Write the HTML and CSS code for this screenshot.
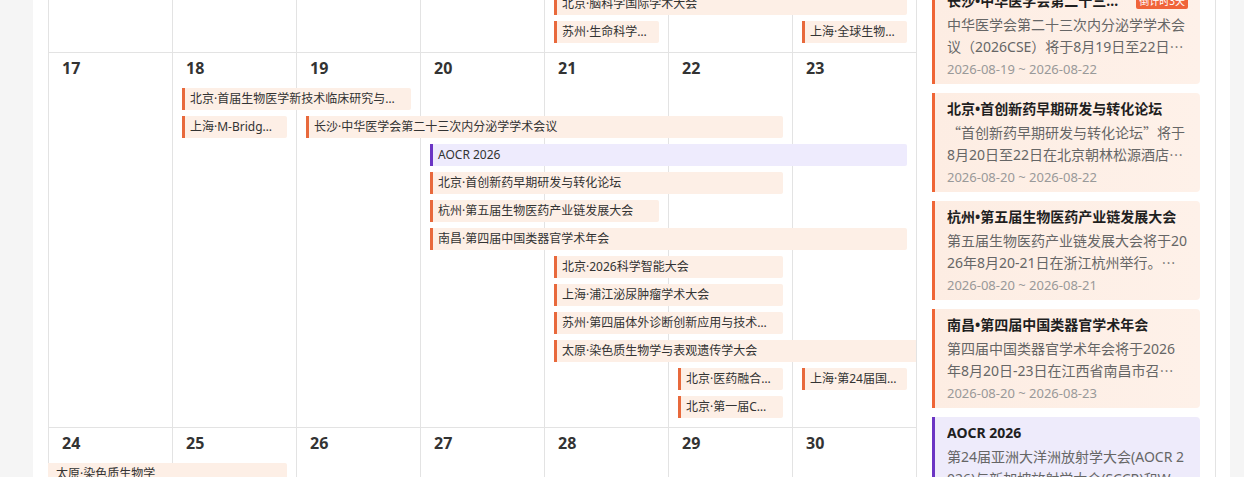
FILE: index.html
```html
<!DOCTYPE html>
<html lang="zh-CN">
<head>
<meta charset="utf-8">
<title>会议日历</title>
<link rel="stylesheet" href="styles.css">
</head>
<body>
<div class="page">
  <div class="calendar">
    <div class="week week-a">
      <div class="cell">10</div><div class="cell">11</div><div class="cell">12</div><div class="cell">13</div><div class="cell">14</div><div class="cell">15</div><div class="cell">16</div>
      <div class="ev" style="grid-column: 5 / span 3; grid-row: 2;">北京·脑科学国际学术大会</div>
      <div class="ev" style="grid-column: 5 / span 1; grid-row: 3;">苏州·生命科学前沿创新论坛</div>
      <div class="ev" style="grid-column: 7 / span 1; grid-row: 3;">上海·全球生物医药创新大会</div>
    </div>
    <div class="week week-b">
      <div class="cell">17</div><div class="cell">18</div><div class="cell">19</div><div class="cell">20</div><div class="cell">21</div><div class="cell">22</div><div class="cell">23</div>
      <div class="ev" style="grid-column: 2 / span 2; grid-row: 2;">北京·首届生物医学新技术临床研究与转化大会</div>
      <div class="ev" style="grid-column: 2 / span 1; grid-row: 3;">上海·M-Bridge 医学创新大会</div>
      <div class="ev" style="grid-column: 3 / span 4; grid-row: 3;">长沙·中华医学会第二十三次内分泌学学术会议</div>
      <div class="ev purple" style="grid-column: 4 / span 4; grid-row: 4;">AOCR 2026</div>
      <div class="ev" style="grid-column: 4 / span 3; grid-row: 5;">北京·首创新药早期研发与转化论坛</div>
      <div class="ev" style="grid-column: 4 / span 2; grid-row: 6;">杭州·第五届生物医药产业链发展大会</div>
      <div class="ev" style="grid-column: 4 / span 4; grid-row: 7;">南昌·第四届中国类器官学术年会</div>
      <div class="ev" style="grid-column: 5 / span 2; grid-row: 8;">北京·2026科学智能大会</div>
      <div class="ev" style="grid-column: 5 / span 2; grid-row: 9;">上海·浦江泌尿肿瘤学术大会</div>
      <div class="ev" style="grid-column: 5 / span 2; grid-row: 10;">苏州·第四届体外诊断创新应用与技术交流大会</div>
      <div class="ev cont-r" style="grid-column: 5 / span 3; grid-row: 11;">太原·染色质生物学与表观遗传学大会</div>
      <div class="ev" style="grid-column: 6 / span 1; grid-row: 12;">北京·医药融合创新大会</div>
      <div class="ev" style="grid-column: 7 / span 1; grid-row: 12;">上海·第24届国际医学大会</div>
      <div class="ev" style="grid-column: 6 / span 1; grid-row: 13;">北京·第一届CAR-T论坛</div>
    </div>
    <div class="week week-c">
      <div class="cell">24</div><div class="cell">25</div><div class="cell">26</div><div class="cell">27</div><div class="cell">28</div><div class="cell">29</div><div class="cell">30</div>
      <div class="ev cont-l" style="grid-column: 1 / span 2; grid-row: 2;">太原·染色质生物学</div>
    </div>
  </div>

  <aside class="sidebar">
    <div class="card">
      <div class="card-head">
        <div class="card-title">长沙•中华医学会第二十三次内分泌学学术会议</div>
        <span class="badge">倒计时3天</span>
      </div>
      <div class="card-desc">中华医学会第二十三次内分泌学学术会议（2026CSE）将于8月19日至22日<span class="cjk">…</span></div>
      <div class="card-date">2026-08-19 ~ 2026-08-22</div>
    </div>
    <div class="card">
      <div class="card-head">
        <div class="card-title">北京•首创新药早期研发与转化论坛</div>
      </div>
      <div class="card-desc"><span class="cjk">“</span>首创新药早期研发与转化论坛<span class="cjk">”</span>将于8月20日至22日在北京朝林松源酒店<span class="cjk">…</span></div>
      <div class="card-date">2026-08-20 ~ 2026-08-22</div>
    </div>
    <div class="card">
      <div class="card-head">
        <div class="card-title">杭州•第五届生物医药产业链发展大会</div>
      </div>
      <div class="card-desc">第五届生物医药产业链发展大会将于2026年8月20-21日在浙江杭州举行。<span class="cjk">…</span></div>
      <div class="card-date">2026-08-20 ~ 2026-08-21</div>
    </div>
    <div class="card">
      <div class="card-head">
        <div class="card-title">南昌•第四届中国类器官学术年会</div>
      </div>
      <div class="card-desc">第四届中国类器官学术年会将于2026年8月20日-23日在江西省南昌市召<span class="cjk">…</span></div>
      <div class="card-date">2026-08-20 ~ 2026-08-23</div>
    </div>
    <div class="card purple">
      <div class="card-head">
        <div class="card-title">AOCR 2026</div>
      </div>
      <div class="card-desc">第24届亚洲大洋洲放射学大会(AOCR 2026)与新加坡放射学大会(SCCR)和W<span class="cjk">…</span></div>
      <div class="card-date">2026-08-20 ~ 2026-08-23</div>
    </div>
  </aside>
</div>
</body>
</html>
```

FILE: styles.css
```css
html, body {
  margin: 0;
  padding: 0;
}
body {
  background: #f5f5f5;
  font-family: "Noto Sans", "Noto Sans CJK SC", sans-serif;
  color: #333;
  overflow: hidden;
  height: 477px;
}
.page {
  display: flex;
  align-items: flex-start;
  box-sizing: border-box;
  width: 1197px;
  margin: -43px 0 0 33px;
  padding: 0 14px 0 15px;
  background: #fff;
}
.calendar {
  flex: none;
  width: 869px;
  box-sizing: border-box;
  border-right: 1px solid #e3e3e3;
}
.week {
  display: grid;
  grid-template-columns: repeat(7, 124px);
  border-top: 1px solid #e3e3e3;
}
.week-a { grid-template-rows: 35px repeat(2, 28px) 3px; }
.week-b { grid-template-rows: 35px repeat(12, 28px) 3px; }
.week-c { grid-template-rows: 35px repeat(3, 28px) 3px; }

.cell {
  grid-row: 1 / -1;
  border-left: 1px solid #e3e3e3;
  padding: 4px 0 0 13px;
  font-size: 16px;
  font-weight: 700;
  line-height: 22px;
  color: #333;
}
.cell:nth-child(1) { grid-column: 1; }
.cell:nth-child(2) { grid-column: 2; }
.cell:nth-child(3) { grid-column: 3; }
.cell:nth-child(4) { grid-column: 4; }
.cell:nth-child(5) { grid-column: 5; }
.cell:nth-child(6) { grid-column: 6; }
.cell:nth-child(7) { grid-column: 7; }

.ev {
  align-self: start;
  min-width: 0;
  height: 22px;
  margin: 0 9px 0 10px;
  padding: 0 10px 0 5px;
  background: #fdefe6;
  border-left: 3px solid #e8693c;
  border-radius: 0 2px 2px 0;
  font-size: 12px;
  line-height: 22px;
  color: #333;
  white-space: nowrap;
  overflow: hidden;
  text-overflow: ellipsis;
}
.ev.purple {
  background: #eeebfd;
  border-left-color: #6b35c4;
}
.ev.cont-r {
  margin-right: 0;
  border-radius: 0;
}
.ev.cont-l {
  margin-left: 0;
  border-left: 0;
  padding-left: 8px;
}

.sidebar {
  flex: none;
  width: 299px;
  box-sizing: border-box;
  padding: 28px 15px 0 15px;
  border-right: 1px solid #e3e3e3;
  display: flex;
  flex-direction: column;
  gap: 9px;
}
.card {
  padding: 5px 12px 4px 12px;
  background: linear-gradient(90deg, #fdede3, #fef1e9);
  border-left: 3px solid #ef6536;
  border-radius: 0 4px 4px 0;
}
.card.purple {
  background: #eeebfb;
  border-left-color: #6b35c4;
}
.card-head {
  display: flex;
  align-items: center;
  gap: 10px;
}
.card-title {
  flex: 1;
  min-width: 0;
  font-size: 14px;
  font-weight: 700;
  line-height: 22px;
  color: #1f1f1f;
  white-space: nowrap;
  overflow: hidden;
  text-overflow: ellipsis;
}
.badge {
  flex: none;
  height: 16px;
  padding: 0 3px;
  background: #f0643a;
  color: #fff;
  font-size: 10px;
  line-height: 16px;
  border-radius: 2px;
}
.card-desc {
  height: 44px;
  margin-top: 2px;
  font-size: 14px;
  line-height: 22px;
  color: #666;
  word-break: break-all;
  overflow: hidden;
}
.cjk {
  font-family: "Noto Sans CJK SC", sans-serif;
  line-height: 1;
}
.card-date {
  font-size: 13px;
  line-height: 22px;
  color: #999;
}
```
